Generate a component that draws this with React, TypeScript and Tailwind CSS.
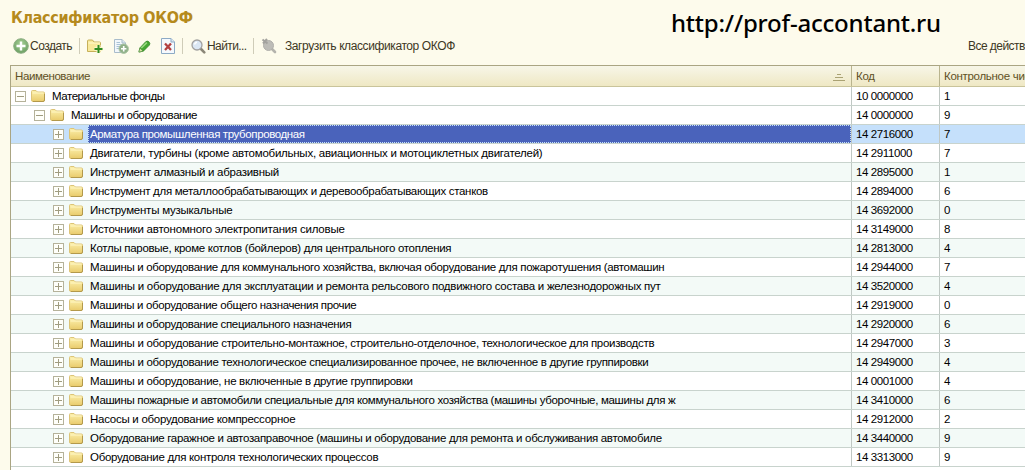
import type { ReactNode } from 'react';

interface Row {
  name: string;
  code: string;
  control: string;
  level: number;
  tracking: string;
}

const rows: Row[] = [
  { name: 'Материальные фонды', code: '10 0000000', control: '1', level: 0, tracking: 'tracking-[-0.45px]' },
  { name: 'Машины и оборудование', code: '14 0000000', control: '9', level: 1, tracking: 'tracking-[-0.42px]' },
  { name: 'Арматура промышленная трубопроводная', code: '14 2716000', control: '7', level: 2, tracking: 'tracking-[-0.38px]' },
  { name: 'Двигатели, турбины (кроме автомобильных, авиационных и мотоциклетных двигателей)', code: '14 2911000', control: '7', level: 2, tracking: 'tracking-[-0.25px]' },
  { name: 'Инструмент алмазный и абразивный', code: '14 2895000', control: '1', level: 2, tracking: 'tracking-[-0.27px]' },
  { name: 'Инструмент для металлообрабатывающих и деревообрабатывающих станков', code: '14 2894000', control: '6', level: 2, tracking: 'tracking-[-0.32px]' },
  { name: 'Инструменты музыкальные', code: '14 3692000', control: '0', level: 2, tracking: 'tracking-[-0.23px]' },
  { name: 'Источники автономного электропитания силовые', code: '14 3149000', control: '8', level: 2, tracking: 'tracking-[-0.21px]' },
  { name: 'Котлы паровые, кроме котлов (бойлеров) для центрального отопления', code: '14 2813000', control: '4', level: 2, tracking: 'tracking-[-0.29px]' },
  { name: 'Машины и оборудование для коммунального хозяйства, включая оборудование для пожаротушения (автомашин', code: '14 2944000', control: '7', level: 2, tracking: 'tracking-[-0.33px]' },
  { name: 'Машины и оборудование для эксплуатации и ремонта рельсового подвижного состава и железнодорожных пут', code: '14 3520000', control: '4', level: 2, tracking: 'tracking-[-0.26px]' },
  { name: 'Машины и оборудование общего назначения прочие', code: '14 2919000', control: '0', level: 2, tracking: 'tracking-[-0.36px]' },
  { name: 'Машины и оборудование специального назначения', code: '14 2920000', control: '6', level: 2, tracking: 'tracking-[-0.34px]' },
  { name: 'Машины и оборудование строительно-монтажное, строительно-отделочное, технологическое для производств', code: '14 2947000', control: '3', level: 2, tracking: 'tracking-[-0.31px]' },
  { name: 'Машины и оборудование технологическое специализированное прочее, не включенное в другие группировки', code: '14 2949000', control: '4', level: 2, tracking: 'tracking-[-0.3px]' },
  { name: 'Машины и оборудование, не включенные в другие группировки', code: '14 0001000', control: '4', level: 2, tracking: 'tracking-[-0.31px]' },
  { name: 'Машины пожарные и автомобили специальные для коммунального хозяйства (машины уборочные, машины для ж', code: '14 3410000', control: '6', level: 2, tracking: 'tracking-[-0.32px]' },
  { name: 'Насосы и оборудование компрессорное', code: '14 2912000', control: '2', level: 2, tracking: 'tracking-[-0.27px]' },
  { name: 'Оборудование гаражное и автозаправочное (машины и оборудование для ремонта и обслуживания автомобиле', code: '14 3440000', control: '9', level: 2, tracking: 'tracking-[-0.32px]' },
  { name: 'Оборудование для контроля технологических процессов', code: '14 3313000', control: '9', level: 2, tracking: 'tracking-[-0.31px]' },
];

const SELECTED = 2;

const indents = ['pl-[4px]', 'pl-[23px]', 'pl-[42px]'];

const Expander = ({ open }: { open: boolean }) => (
  <svg width="11" height="11" viewBox="0 0 11 11" className="shrink-0" shapeRendering="crispEdges">
    <rect x="0.5" y="0.5" width="10" height="10" fill="#fffffa" stroke="#b5b29a" />
    <path d={open ? 'M2 5.5h7' : 'M2 5.5h7M5.5 2v7'} stroke="#a09c80" fill="none" />
  </svg>
);

const Folder = () => (
  <svg width="14" height="12" viewBox="0 0 14 12" className="ml-[5px] shrink-0">
    <defs>
      <linearGradient id="folder" x1="0" y1="0" x2="0" y2="1">
        <stop offset="0" stopColor="#fcf0ac" />
        <stop offset="1" stopColor="#e9cb6b" />
      </linearGradient>
    </defs>
    <path d="M.5 10V1.500Q.5.5 1.500.5H5L6.500 2H12.500Q13.500 2 13.500 3V10Q13.500 11.500 12 11.500H2Q.5 11.500 .5 10Z" fill="url(#folder)" stroke="#dcc478" />
    <path d="M1.500 3H12.500" stroke="#fff6c4" />
    <path d="M2 11.500H12Q13.500 11.500 13.500 10V4" stroke="#b3994b" fill="none" />
  </svg>
);

const CreateIcon = () => (
  <svg width="16" height="16" viewBox="0 0 16 16">
    <defs>
      <radialGradient id="create" cx=".5" cy=".35" r=".65">
        <stop offset="0" stopColor="#a8cf96" />
        <stop offset="1" stopColor="#6a9f62" />
      </radialGradient>
    </defs>
    <circle cx="8" cy="8" r="7.300" fill="url(#create)" stroke="#8eae84" />
    <path d="M8 3.500v9M3.500 8h9" stroke="#fff" strokeWidth="2.400" />
  </svg>
);

const AddFolderIcon = () => (
  <svg width="16" height="16" viewBox="0 0 16 16">
    <path d="M.5 13.500V3Q.5 2 1.500 2H5.500L7 4H12.500Q13.500 4 13.500 5V13.500Z" fill="#f8e99b" stroke="#c6b059" />
    <path d="M1.500 5H13" stroke="#fffbd0" />
    <path d="M11.500 7v8M7.500 11h8" stroke="#fbf7c9" strokeWidth="4" />
    <path d="M11.500 7v8M7.500 11h8" stroke="#2f8b22" strokeWidth="2" />
  </svg>
);

const CopyIcon = () => (
  <svg width="16" height="16" viewBox="0 0 16 16">
    <path d="M1.500 1.500H9L12.500 5V14.500H1.500Z" fill="#f2f7fb" stroke="#a9bccb" />
    <path d="M9 1.500V5H12.500" fill="#dbe7f0" stroke="#a9bccb" />
    <path d="M3.500 4.500H7M3.500 6.500H10M3.500 8.500H8M3.500 10.500H7" stroke="#a9c3d6" />
    <circle cx="10.700" cy="10.700" r="4.700" fill="#8fb088" stroke="#a9c3a2" />
    <path d="M10.700 8v5.400M8 10.700h5.400" stroke="#fff" strokeWidth="1.600" />
  </svg>
);

const PencilIcon = () => (
  <svg width="13" height="13" viewBox="0 0 14 14">
    <path d="M1 13L2 8.500L8.300 1.800Q10 .5 11.800 2Q13.500 3.700 12.300 5.500L5.800 12Z" fill="#45a633" stroke="#2d8422" strokeWidth=".8" />
    <path d="M3.600 8.700L9.500 2.800" stroke="#9ada80" strokeWidth="1.600" />
    <path d="M1 13L2 8.700L5.500 12Z" fill="#d8e6a7" stroke="#39792d" strokeWidth=".5" />
  </svg>
);

const DeleteIcon = () => (
  <svg width="14" height="16" viewBox="0 0 14 16">
    <path d="M.5.5H10L13.500 4V15.500H.5Z" fill="#f5f9fd" stroke="#8daac5" />
    <path d="M10 .5V4H13.500" fill="#dce8f4" stroke="#8daac5" />
    <path d="M4 5.500L10 12M10 5.500L4 12" stroke="#b34040" strokeWidth="2.300" />
  </svg>
);

const FindIcon = () => (
  <svg width="15" height="15" viewBox="0 0 15 15">
    <path d="M10 10L13.300 13.300" stroke="#8b8778" strokeWidth="2.600" strokeLinecap="round" />
    <circle cx="6" cy="6" r="5" fill="#dbe7f4" stroke="#a2a1a0" strokeWidth="1.300" />
    <path d="M3.500 5.500Q4 3.500 6 3.200" stroke="#fff" strokeWidth="1.500" fill="none" />
  </svg>
);

const LoadIcon = () => (
  <svg width="16" height="16" viewBox="0 0 16 16">
    <path d="M10.500 10.500L14 14" stroke="#b4b3ad" strokeWidth="2.600" strokeLinecap="round" />
    <circle cx="7.500" cy="7.500" r="5" fill="#bdbcb7" stroke="#b0afaa" />
    <path d="M1.500 1.500L6.500 5.500M6 1L2 5.500" stroke="#a3a29e" strokeWidth="2" />
  </svg>
);

const Separator = () => <div className="h-4 w-px shrink-0 bg-[#cfccb8]" />;

const HeadCell = ({ children, className }: { children: ReactNode; className: string }) => (
  <div className={`flex items-center pt-px text-[#5f5126] ${className}`}>{children}</div>
);

const App = () => {
  return (
    <div className="flex h-[470px] w-[1025px] flex-col overflow-hidden bg-[#fdfbec] font-['Liberation_Sans',sans-serif] text-[11.5px] text-black">
      <div className="flex h-[65px] shrink-0 justify-between">
        <div className="flex flex-col">
          <h1 className="mt-[6px] ml-[11px] h-6 font-['DejaVu_Sans_Condensed','DejaVu_Sans',sans-serif] text-[16px] leading-6 font-bold tracking-[-0.3px] whitespace-nowrap text-[#b58a1c] [font-stretch:condensed]">
            Классификатор ОКОФ
          </h1>
          <div className="mt-[6px] ml-[13px] flex h-5 items-center text-[12px] tracking-[-0.4px] whitespace-nowrap text-[#3d3824]">
            <CreateIcon />
            <span className="ml-px w-[49px] tracking-[-0.5px]">Создать</span>
            <Separator />
            <div className="ml-[7px] flex w-[88px] items-center justify-between">
              <AddFolderIcon />
              <CopyIcon />
              <PencilIcon />
              <DeleteIcon />
            </div>
            <div className="ml-[7px] flex items-center">
              <Separator />
              <div className="ml-2 flex items-center">
                <FindIcon />
                <span className="ml-px w-[46px] tracking-[-0.6px]">Найти...</span>
              </div>
            </div>
            <Separator />
            <div className="ml-[7px] flex items-center">
              <LoadIcon />
              <span className="ml-2">Загрузить классификатор ОКОФ</span>
            </div>
          </div>
        </div>
        <div className="flex w-[354px] flex-col whitespace-nowrap">
          <div className="mt-[8px] h-[30px] font-['Noto_Sans',sans-serif] text-[24px] leading-[30px] font-medium tracking-[-0.2px] text-black">
            http://prof-accontant.ru
          </div>
          <div className="ml-[297px] h-4 text-[12px] leading-4 tracking-[-0.55px] text-[#3d3824]">Все действия</div>
        </div>
      </div>

      <div className="ml-[10px] grow border-t border-l border-[#aaa583] bg-white">
        <div className="flex h-[21px] border-b border-[#c9c49b] bg-linear-to-b from-[#f7f6e8] to-[#efe8c4]">
          <HeadCell className="w-[841px] shrink-0 justify-between border-r border-[#b9b48e] pr-[6px] pl-[4px]">
            <span className="tracking-[-0.4px]">Наименование</span>
            <svg width="12" height="8" viewBox="0 0 12 8" shapeRendering="crispEdges">
              <path d="M4 1.500h4M2 4.500h8M0 7.500h12" stroke="#aaa273" />
            </svg>
          </HeadCell>
          <HeadCell className="w-[88px] shrink-0 border-r border-[#b9b48e] pl-[4px]">
            <span className="tracking-[-0.3px]">Код</span>
          </HeadCell>
          <HeadCell className="min-w-0 grow overflow-hidden pl-[4px] whitespace-nowrap">
            <span className="tracking-[-0.3px]">Контрольное число</span>
          </HeadCell>
        </div>

        {rows.map((row, i) => {
          const selected = i === SELECTED;
          const bg = selected ? 'bg-[#c5e0fb]' : i % 2 === 0 && i > 2 ? 'bg-[#f3faf7]' : 'bg-white';
          return (
            <div key={row.code} className={`flex h-[19px] border-b border-[#c8d3cd] whitespace-nowrap ${bg}`}>
              <div className={`flex w-[841px] items-center border-r border-[#c0c8c4] ${indents[row.level]}`}>
                <Expander open={row.level < 2} />
                <Folder />
                <div
                  className={`ml-[5px] flex h-[18px] grow items-center border border-dotted pt-[2px] pl-px ${row.tracking} ${
                    selected ? 'border-[#c5e0fb] bg-[#4a63bb] text-white' : 'border-transparent'
                  }`}
                >
                  {row.name}
                </div>
              </div>
              <div className="flex w-[88px] items-center border-r border-[#c0c8c4] pt-[2px] pl-[4px] tracking-[-0.4px]">
                {row.code}
              </div>
              <div className="flex grow items-center pt-[2px] pl-[4px]">{row.control}</div>
            </div>
          );
        })}
      </div>
    </div>
  );
};

export default App;
